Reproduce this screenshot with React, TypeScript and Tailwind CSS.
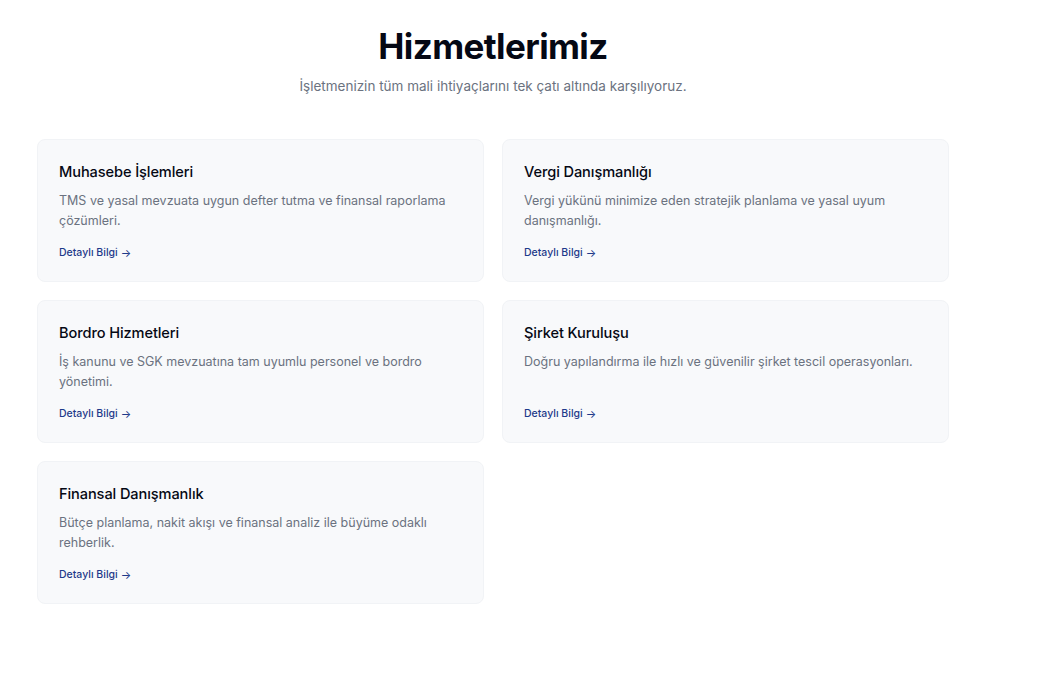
import React from "react";

type Service = {
  title: string;
  desc: string;
};

const services: Service[] = [
  {
    title: "Muhasebe İşlemleri",
    desc: "TMS ve yasal mevzuata uygun defter tutma ve finansal raporlama çözümleri.",
  },
  {
    title: "Vergi Danışmanlığı",
    desc: "Vergi yükünü minimize eden stratejik planlama ve yasal uyum danışmanlığı.",
  },
  {
    title: "Bordro Hizmetleri",
    desc: "İş kanunu ve SGK mevzuatına tam uyumlu personel ve bordro yönetimi.",
  },
  {
    title: "Şirket Kuruluşu",
    desc: "Doğru yapılandırma ile hızlı ve güvenilir şirket tescil operasyonları.",
  },
  {
    title: "Finansal Danışmanlık",
    desc: "Bütçe planlama, nakit akışı ve finansal analiz ile büyüme odaklı rehberlik.",
  },
];

const ServiceCard: React.FC<{ service: Service }> = ({ service }) => (
  <div className="flex flex-col h-[143px] rounded-lg border border-[#f1f3f6] bg-[#f8f9fb] px-[21px] pt-[21px] pb-[21px]">
    <h3 className="text-[14.6px] leading-[22px] font-medium text-[#050814] tracking-[-0.1px]">
      {service.title}
    </h3>
    <p className="mt-[8px] text-[12.5px] leading-[20px] text-[#6b7280] grow">
      {service.desc}
    </p>
    <a
      href="#"
      className="flex items-center gap-[3px] text-[10.5px] leading-[14px] font-medium text-[#1e3a8a]"
    >
      Detaylı Bilgi
      <span className="text-[11px] font-normal">→</span>
    </a>
  </div>
);

const App: React.FC = () => {
  return (
    <div
      className="min-h-screen bg-white"
      style={{ fontFamily: "Inter, 'Noto Sans', sans-serif" }}
    >
      <div className="w-[986px] px-[37px] pt-[24px]">
        <h1 className="text-center text-[35px] leading-[44px] font-bold tracking-[-0.6px] text-[#050814]">
          Hizmetlerimiz
        </h1>
        <p className="mt-[8px] text-center text-[13.5px] leading-[20px] text-[#6b7280]">
          İşletmenizin tüm mali ihtiyaçlarını tek çatı altında karşılıyoruz.
        </p>
        <div className="mt-[43px] grid grid-cols-2 gap-x-[18px] gap-y-[18px]">
          {services.map((s) => (
            <ServiceCard key={s.title} service={s} />
          ))}
        </div>
      </div>
    </div>
  );
};

export default App;
